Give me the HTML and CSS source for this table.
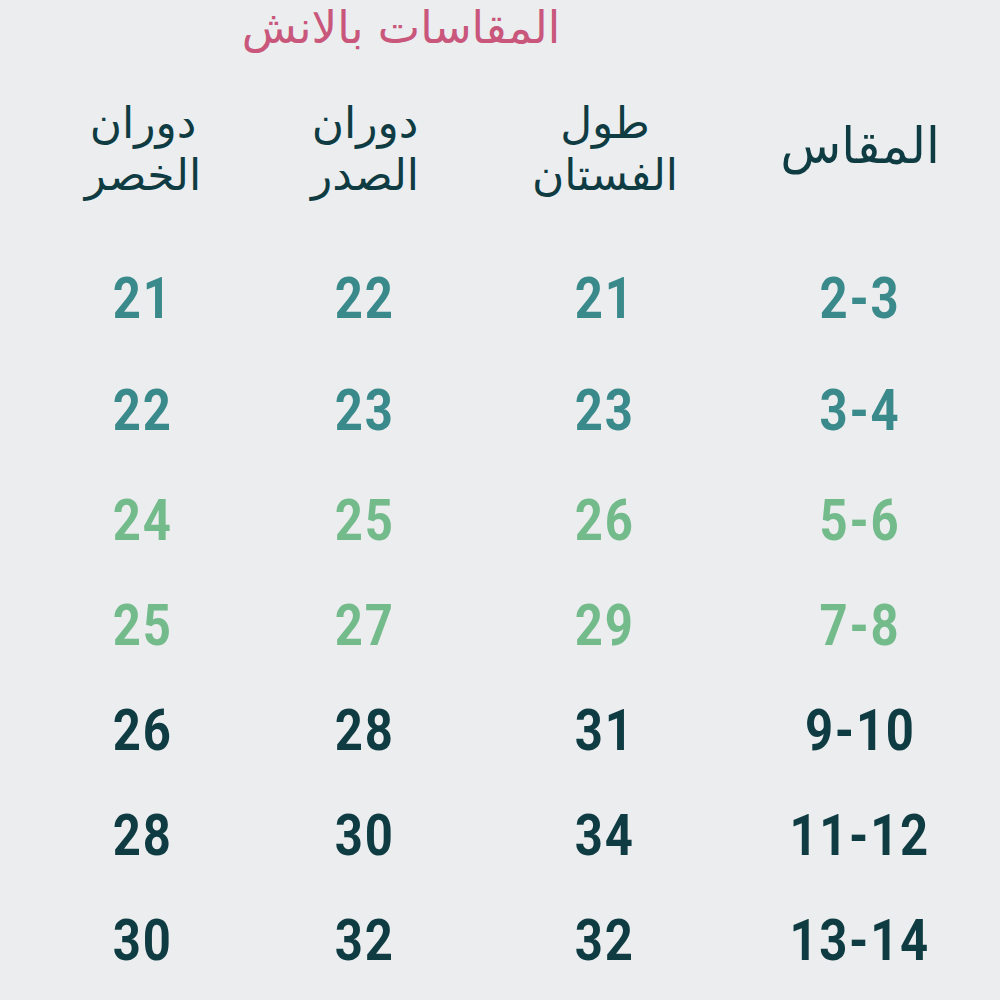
FILE: index.html
```html
<!DOCTYPE html>
<html lang="ar" dir="rtl">
<head>
<meta charset="utf-8">
<link rel="stylesheet" href="styles.css">
</head>
<body>
<div class="page">
  <div class="title-wrap"><h1 class="title">المقاسات بالانش</h1></div>
  <div class="table">
    <div class="head head-single"><span>المقاس</span></div>
    <div class="head"><span>طول</span><span>الفستان</span></div>
    <div class="head"><span>دوران</span><span>الصدر</span></div>
    <div class="head"><span>دوران</span><span>الخصر</span></div>

    <div class="cell teal"><span>2-3</span></div><div class="cell teal"><span>21</span></div><div class="cell teal"><span>22</span></div><div class="cell teal"><span>21</span></div>
    <div class="cell teal"><span>3-4</span></div><div class="cell teal"><span>23</span></div><div class="cell teal"><span>23</span></div><div class="cell teal"><span>22</span></div>
    <div class="cell green"><span>5-6</span></div><div class="cell green"><span>26</span></div><div class="cell green"><span>25</span></div><div class="cell green"><span>24</span></div>
    <div class="cell green"><span>7-8</span></div><div class="cell green"><span>29</span></div><div class="cell green"><span>27</span></div><div class="cell green"><span>25</span></div>
    <div class="cell dark"><span>9-10</span></div><div class="cell dark"><span>31</span></div><div class="cell dark"><span>28</span></div><div class="cell dark"><span>26</span></div>
    <div class="cell dark"><span>11-12</span></div><div class="cell dark"><span>34</span></div><div class="cell dark"><span>30</span></div><div class="cell dark"><span>28</span></div>
    <div class="cell dark"><span>13-14</span></div><div class="cell dark"><span>32</span></div><div class="cell dark"><span>32</span></div><div class="cell dark"><span>30</span></div>
  </div>
</div>
</body>
</html>
```
FILE: styles.css
```css
html, body {
  margin: 0;
  padding: 0;
  background: #ebedef;
}
.page {
  width: 1000px;
  height: 1000px;
  overflow: hidden;
  direction: rtl;
  font-family: "DejaVu Sans", sans-serif;
}
.title-wrap {
  height: 54px;
  display: flex;
  justify-content: flex-end;
}
.title {
  margin: 0;
  padding-top: 2px;
  width: 802px;
  text-align: center;
  font-weight: normal;
  font-size: 45px;
  line-height: 52px;
  color: #c9577b;
}
.table {
  display: grid;
  grid-template-columns: 256px 254px 226px 218px;
  grid-template-rows: 189px 110px 115px 105px 105px 105px 105px 105px;
  padding-right: 12px;
  padding-left: 34px;
}
.head {
  display: flex;
  flex-direction: column;
  align-items: center;
  justify-content: center;
  color: #0f3c42;
  font-size: 44px;
  line-height: 52px;
}
.head-single {
  font-size: 50px;
  padding-bottom: 6px;
}
.cell {
  display: flex;
  align-items: center;
  justify-content: center;
  direction: ltr;
  font-family: Roboto, "DejaVu Sans", sans-serif;
  font-weight: 700;
  font-size: 57px;
  line-height: 1;
  letter-spacing: 2px;
}
.cell span {
  display: inline-block;
  transform: scaleX(0.86);
}
.teal { color: #3b8a8b; }
.green { color: #74bb8c; }
.dark { color: #0f3c42; }
```
